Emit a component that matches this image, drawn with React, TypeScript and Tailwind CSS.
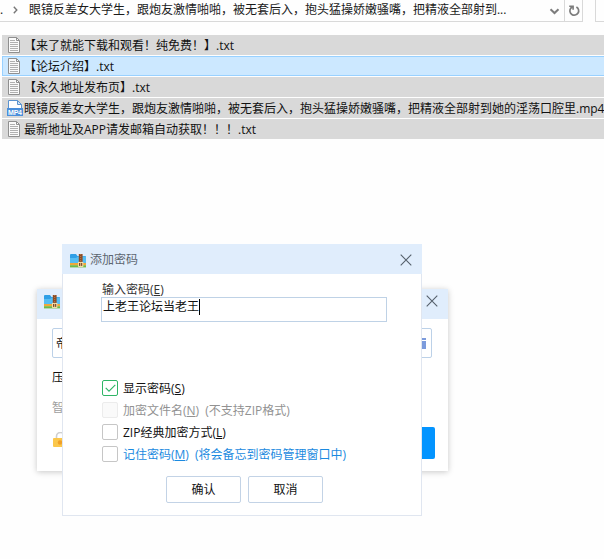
import clsx from "clsx";
import type { ReactNode } from "react";

type FileEntry = {
  name: string;
  kind: "txt" | "mp4";
  focused?: boolean;
};

const FOLDER = "眼镜反差女大学生，跟炮友激情啪啪，被无套后入，抱头猛操娇嫩骚嘴，把精液全部射到...";

const files: FileEntry[] = [
  { name: "【来了就能下载和观看！纯免费！】.txt", kind: "txt" },
  { name: "【论坛介绍】.txt", kind: "txt", focused: true },
  { name: "【永久地址发布页】.txt", kind: "txt" },
  {
    name: "眼镜反差女大学生，跟炮友激情啪啪，被无套后入，抱头猛操娇嫩骚嘴，把精液全部射到她的淫荡口腔里.mp4",
    kind: "mp4",
  },
  { name: "最新地址及APP请发邮箱自动获取！！！.txt", kind: "txt" },
];

function TxtIcon() {
  return (
    <svg width="12" height="16" viewBox="0 0 12 16" className="ml-[5px] mr-1 shrink-0">
      <path d="M.5.5h8l3 3v12H.5z" fill="#fafafa" stroke="#8f8f8f" />
      <path d="M8.5.5v3h3" fill="none" stroke="#8f8f8f" />
      <path d="M2 3.5h5M2 5.5h8M2 7.5h8M2 9.5h8M2 11.5h8M2 13.5h8" stroke="#b0b0b0" />
    </svg>
  );
}

function Mp4Icon() {
  return (
    <svg width="16" height="17" viewBox="0 0 16 17" className="ml-1 mr-[1px] shrink-0">
      <path d="M1.5 9V.5h9l4 4V9" fill="#fff" stroke="#5b93cf" />
      <path d="M10.5.5v4h4z" fill="#d3e5f7" stroke="#5b93cf" />
      <rect y="8" width="16" height="8" fill="#4a8fdb" />
      <text x="8" y="14.6" textAnchor="middle" fontSize="7" fontWeight="700" fontFamily="Liberation Sans, sans-serif" fill="#fff" textLength="14">
        MP4
      </text>
    </svg>
  );
}

function ArchiveIcon() {
  return (
    <svg width="17" height="15" viewBox="0 0 17 15" className="shrink-0">
      <path d="M0 2Q0 1 1 1h5l1.5 2H15q1 0 1 1v7H0z" fill="#2f9fe6" />
      <path d="M0 5h6l2-1.5h8V11H0z" fill="#55bdf3" />
      <rect y="10" width="16" height="2.2" fill="#efa83a" />
      <rect y="12.2" width="16" height="2.2" fill="#72b844" />
      <rect x="8.8" y="1" width="3.8" height="9" fill="#8a4b26" />
      <path d="M10.7 1v8" stroke="#b97a48" strokeDasharray="1 1" />
      <rect x="8.6" y="9.4" width="4.2" height="4" fill="#6b3a1c" stroke="#ffe7b0" />
      <path d="M10.7 10v3" stroke="#ffe7b0" strokeWidth=".8" />
    </svg>
  );
}

function CloseIcon() {
  return (
    <svg width="12" height="12" viewBox="0 0 12 12" className="shrink-0">
      <path d="M.7.7l10.6 10.6M11.3.7L.7 11.3" stroke="#55606c" strokeWidth="1.1" fill="none" />
    </svg>
  );
}

function AddressBar() {
  return (
    <div className="flex h-[22px] text-[#1a1a1a]">
      <div className="flex h-[22px] w-[583px] shrink-0 border-b border-r border-[#d9d9d9]">
        <span className="w-[13px] leading-5">.</span>
        <svg width="5" height="8" viewBox="0 0 5 8" className="mt-[6px] mr-[11px] shrink-0">
          <path d="M.8.8L3.8 4 .8 7.2" fill="none" stroke="#777" strokeWidth="1.4" />
        </svg>
        <span className="w-[521px] leading-5 whitespace-nowrap">{FOLDER}</span>
        <svg width="11" height="7" viewBox="0 0 11 7" className="mt-2 mr-1 shrink-0">
          <path d="M1.5 1.2l4 3.8 4-3.8" fill="none" stroke="#7d7d7d" strokeWidth="2" />
        </svg>
        <div className="flex w-[18px] justify-center border-l border-[#d9d9d9] pt-[5px]">
          <svg width="12" height="12" viewBox="0 0 12 12">
            <path d="M8.4 1.9A4.4 4.4 0 1 1 2.7 3.2L4.6 2" fill="none" stroke="#7d7d7d" strokeWidth="1.7" />
            <path d="M1.2 1.2h3.9v3.6" fill="none" stroke="#7d7d7d" strokeWidth="1.6" />
          </svg>
        </div>
      </div>
      <div className="ml-3 flex-1 border-b border-l border-[#d9d9d9]" />
    </div>
  );
}

function FileRow({ name, kind, focused }: FileEntry) {
  return (
    <div
      className={clsx(
        "flex h-5 items-center border border-r-0 whitespace-nowrap",
        focused ? "border-[#99d1ff] bg-[#cce8ff]" : "border-[#d9d9d9] bg-[#d9d9d9]"
      )}
    >
      {kind === "txt" ? <TxtIcon /> : <Mp4Icon />}
      <span className="pt-[2px] leading-[18px]">{name}</span>
    </div>
  );
}

function CheckRow({ checked, disabled, className, children }: {
  checked?: boolean;
  disabled?: boolean;
  className?: string;
  children: ReactNode;
}) {
  return (
    <label className={clsx("flex h-4 items-center gap-[5px] whitespace-nowrap", className)}>
      <span
        className={clsx(
          "flex size-4 shrink-0 items-center justify-center rounded-[2px] border",
          checked ? "border-[#2fb566]" : disabled ? "border-[#ececec] bg-[#fafafa]" : "border-[#c6c6c6]"
        )}
      >
        {checked && (
          <svg width="11" height="8" viewBox="0 0 11 8">
            <path d="M.7 3.8l3.3 3.3L10.3.8" fill="none" stroke="#2fb566" strokeWidth="1.1" />
          </svg>
        )}
      </span>
      <span className="pt-[2px] leading-4 [word-spacing:3px]">{children}</span>
    </label>
  );
}

function CompressDialog() {
  return (
    <div className="absolute left-[37px] top-[289px] flex h-[182px] w-[411px] flex-col bg-white shadow-[0_1px_6px_rgba(0,0,0,0.22)]">
      <div className="flex h-[30px] shrink-0 justify-between bg-[#e0edfc] pt-[5px] pr-[10px] pl-[7px]">
        <ArchiveIcon />
        <div className="pt-px">
          <CloseIcon />
        </div>
      </div>
      <div className="mt-[9px] ml-[15px] flex h-[30px] w-[380px] items-center justify-between rounded-[2px] border border-[#bcd1e8] pr-[5px] pl-[3px]">
        <span className="pt-[2px]">帝</span>
        <span className="flex flex-col gap-px">
          <i className="h-[2px] w-[5px] bg-[#7c9bdc]" />
          <i className="h-2 w-[5px] bg-[#7c9bdc]" />
        </span>
      </div>
      <span className="mt-[12px] ml-[15px] leading-4">压</span>
      <span className="mt-[14px] ml-[15px] leading-4 text-[#a0a0a0]">智</span>
      <div className="mt-[11px] flex justify-between pr-[13px] pl-[16px]">
        <svg width="15" height="16" viewBox="0 0 15 16" className="mt-[5px]">
          <path d="M3.5 7V4.5a4 4 0 0 1 8 0V7" fill="none" stroke="#cfcfcf" strokeWidth="1.6" />
          <rect x="0" y="6" width="15" height="9" rx="1" fill="#fbc74b" />
          <circle cx="7" cy="10.5" r="2.2" fill="#f0a028" />
        </svg>
        <div className="h-8 w-24 rounded-[2px] bg-[#0394ff]" />
      </div>
    </div>
  );
}

function PasswordDialog() {
  return (
    <div className="absolute left-[62px] top-[244px] flex h-[272px] w-[360px] flex-col border border-[#e0e6f0] bg-white">
      <div className="-mx-px -mt-px flex h-[30px] shrink-0 items-center bg-[#e0edfc] pt-[2px] pr-[10px] pl-2">
        <ArchiveIcon />
        <span className="ml-[3px] flex-1 text-[#5c6570]">添加密码</span>
        <CloseIcon />
      </div>
      <div className="flex flex-col pt-2 pl-[38px]">
        <span className="h-[15px] pl-[1px] leading-4 text-[#333]">
          输入密码(<u>E</u>)
        </span>
        <div className="flex h-[25px] w-[286px] border border-[#bfd2e6] pt-[1px] pl-px">
          <span className="leading-4">上老王论坛当老王</span>
          <span className="h-4 w-px bg-black" />
        </div>
        <div className="mt-[58px] ml-[1px] flex flex-col gap-[6px]">
          <CheckRow checked>
            显示密码(<u>S</u>)
          </CheckRow>
          <CheckRow disabled className="text-[#929292]">
            加密文件名(<u>N</u>) (不支持ZIP格式)
          </CheckRow>
          <CheckRow>
            ZIP经典加密方式(<u>L</u>)
          </CheckRow>
          <CheckRow className="text-[#1b8ae0]">
            记住密码(<u>M</u>) (将会备忘到密码管理窗口中)
          </CheckRow>
        </div>
        <div className="mt-[14px] ml-[65px] flex gap-[7px]">
          <button className="h-[27px] w-[75px] rounded-[2px] border border-[#c3d3e6] pt-px">确认</button>
          <button className="h-[27px] w-[75px] rounded-[2px] border border-[#c3d3e6] pt-px">取消</button>
        </div>
      </div>
    </div>
  );
}

export default function App() {
  return (
    <div className="relative h-[559px] w-[604px] overflow-hidden bg-[#fefefe] font-['Open_Sans','Noto_Sans_CJK_SC',sans-serif] text-[12px] text-[#111] [text-spacing-trim:space-all]">
      <AddressBar />
      <div className="mt-[13px] ml-[2px] flex flex-col gap-px">
        {files.map((file) => (
          <FileRow key={file.name} {...file} />
        ))}
      </div>
      <CompressDialog />
      <PasswordDialog />
    </div>
  );
}
